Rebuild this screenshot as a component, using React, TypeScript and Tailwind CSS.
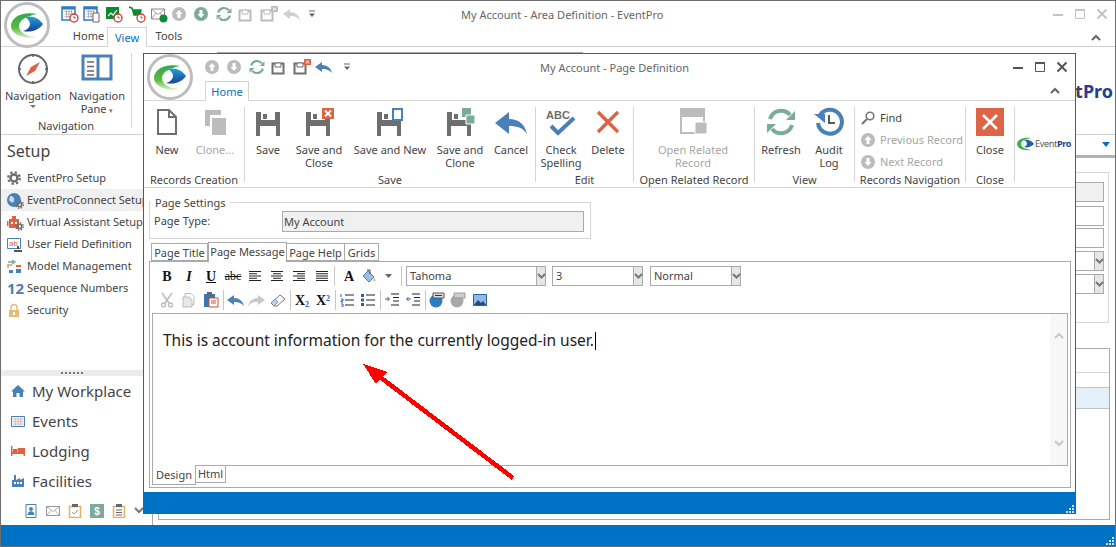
import type { ReactNode } from "react";

const GRAY = "#6e6e6e";
const LIGHT = "#bcbcbc";
const GREEN = "#7dab9b";
const BLUE = "#4a80b8";
const RED = "#dc6444";

function Logo({ size = 46 }: { size?: number }) {
  return (
    <svg width={size} height={size} viewBox="0 0 46 46">
      <defs>
        <linearGradient id="swoosh" x1="0" y1="0" x2="0" y2="1">
          <stop offset="0" stopColor="#2fa84a" />
          <stop offset="0.6" stopColor="#5cbb3f" />
          <stop offset="1" stopColor="#d6edc0" />
        </linearGradient>
        <linearGradient id="lens" x1="0" y1="0" x2="0" y2="1">
          <stop offset="0" stopColor="#1ea3d8" />
          <stop offset="1" stopColor="#1d3f96" />
        </linearGradient>
      </defs>
      <circle cx="23" cy="23" r="21.5" fill="#fff" stroke="#bdbdbd" strokeWidth="3" />
      <path d="M33 12C19 9 7 15 7 24c0 8 12 14 26 11-11 0-18-5-18-11 0-6 8-10 18-12z" fill="url(#swoosh)" />
      <path d="M21 15c7-2 14 1 18 7-4 6-12 9-20 7 4-1 7-4 7-7s-2-5-5-7z" fill="url(#lens)" />
    </svg>
  );
}

function Sv({ s = 16, w, h, v, children }: { s?: number; w?: number; h?: number; v?: string; children: ReactNode }) {
  const ww = w ?? s;
  const hh = h ?? s;
  return (
    <svg width={ww} height={hh} viewBox={v ?? `0 0 ${ww} ${hh}`} className="shrink-0">
      {children}
    </svg>
  );
}

function Floppy({ c = GRAY }: { c?: string }) {
  return (
    <>
      <path d="M2 4h24v24H2z" fill={c} />
      <path d="M7 4h14v8H7z" fill="#fff" />
      <path d="M9 6h4v5H9z" fill={c} />
      <path d="M6 18h16v10H6z" fill="#fff" />
    </>
  );
}

const NewIcon = () => (
  <Sv s={28}>
    <path d="M5 2h11l7 7v17H5z" fill="#fff" stroke={GRAY} strokeWidth="2" />
    <path d="M16 2v7h7" fill="none" stroke={GRAY} strokeWidth="2" />
  </Sv>
);
const CloneIcon = () => (
  <Sv s={28}>
    <path d="M4 2h16v16H4z" fill={LIGHT} />
    <path d="M9 7h16v21H9z" fill="#fff" />
    <path d="M11 10h14v17H11z" fill={LIGHT} />
  </Sv>
);
const SaveIcon = () => (
  <Sv s={28}>
    <Floppy />
  </Sv>
);
const SaveCloseIcon = () => (
  <Sv w={30} h={28}>
    <Floppy />
    <path d="M18 0h12v11H18z" fill={RED} />
    <path d="M21 2.5l6 6M27 2.5l-6 6" stroke="#fff" strokeWidth="1.8" />
  </Sv>
);
const SaveNewIcon = () => (
  <Sv w={30} h={28}>
    <Floppy />
    <path d="M18 1h9v11h-9z" fill="#fff" stroke={BLUE} strokeWidth="2" />
  </Sv>
);
const SaveCloneIcon = () => (
  <Sv w={30} h={28}>
    <Floppy />
    <path d="M17 0h9v9h-9z" fill={GREEN} />
    <path d="M21 7h9v9h-9z" fill={GREEN} stroke="#fff" strokeWidth="1" />
  </Sv>
);
const CancelIcon = () => (
  <Sv w={32} h={28}>
    <path d="M0 15L14 4v7c9 0 16 5 18 15-4-6-9-8-18-8v8z" fill={BLUE} />
  </Sv>
);
const SpellIcon = () => (
  <Sv w={32} h={28}>
    <text x="1" y="11" fontSize="11" fontWeight="700" fill={GRAY} fontFamily="Liberation Sans, sans-serif">ABC</text>
    <path d="M6 18l7 7L29 10" fill="none" stroke={BLUE} strokeWidth="4" />
  </Sv>
);
const DeleteIcon = () => (
  <Sv s={28}>
    <path d="M4 4l20 20M24 4L4 24" stroke={RED} strokeWidth="3.4" />
  </Sv>
);
const RelatedIcon = () => (
  <Sv s={30}>
    <path d="M2 1h25v8H2z" fill={LIGHT} />
    <path d="M3 9h23v17H3z" fill="#fff" stroke={LIGHT} strokeWidth="2" />
    <path d="M17 15h12v12H17z" fill={LIGHT} stroke="#fff" strokeWidth="1" />
  </Sv>
);
const RefreshIcon = ({ s = 30 }: { s?: number }) => (
  <Sv s={s} v="0 0 30 30">
    <path d="M4 12A11.5 11.5 0 0 1 24 8" fill="none" stroke={GREEN} strokeWidth="4" />
    <path d="M20 13h9V4z" fill={GREEN} />
    <path d="M26 18A11.5 11.5 0 0 1 6 22" fill="none" stroke={GREEN} strokeWidth="4" />
    <path d="M10 17H1v9z" fill={GREEN} />
  </Sv>
);
const AuditIcon = () => (
  <Sv s={30}>
    <path d="M6 8a12 12 0 1 1-2 8" fill="none" stroke={BLUE} strokeWidth="4" />
    <path d="M0 7h11v9z" fill={BLUE} />
    <path d="M15 8v8h6" fill="none" stroke="#5a5a5a" strokeWidth="2" />
  </Sv>
);
const CloseBig = () => (
  <div className="flex h-[28px] w-[28px] items-center justify-center bg-[#dd6547]">
    <Sv s={18}>
      <path d="M2 2l14 14M16 2L2 16" stroke="#fff" strokeWidth="2.6" />
    </Sv>
  </div>
);

function CircleArrow({ up, c = LIGHT, s = 14 }: { up?: boolean; c?: string; s?: number }) {
  return (
    <Sv s={s} v="0 0 14 14">
      <circle cx="7" cy="7" r="7" fill={c} />
      <path d={up ? "M7 3L3.5 7H5.5V11H8.5V7H10.5z" : "M7 11L3.5 7H5.5V3H8.5V7H10.5z"} fill="#fff" />
    </Sv>
  );
}

function SmallSave({ x, c }: { x?: boolean; c: string }) {
  return (
    <Sv w={19} h={16}>
      <path d="M1.5 4.5h11v10h-11z" fill="none" stroke={c} strokeWidth="2" />
      <path d="M4 4h6v4H4z" fill="#fff" stroke={c} strokeWidth="1" />
      {!x && <path d="M13 4h-1v10h1z" fill={c} />}
      {x && <path d="M11 0h7v6h-7z" fill={c === GRAY ? RED : LIGHT} />}
      {x && <path d="M13 1.5l3 3M16 1.5l-3 3" stroke="#fff" strokeWidth="1" />}
    </Sv>
  );
}

function SmallBack({ c }: { c: string }) {
  return (
    <Sv w={17} h={14}>
      <path d="M0 7l7-5v3c5 0 9 3 10 8-3-3-5-4-10-4v3z" fill={c} />
    </Sv>
  );
}

const QatCaret = () => (
  <Sv s={8}>
    <path d="M1 1h6" stroke="#666" strokeWidth="1" />
    <path d="M1 3.5h6L4 7z" fill="#666" />
  </Sv>
);

function Cal({ frame = "#2c7cc4", tail }: { frame?: string; tail: ReactNode }) {
  return (
    <Sv s={18}>
      <path d="M1 2h13v13H1z" fill="#fff" stroke={frame} strokeWidth="1.5" />
      <path d="M1 2h13v2.5H1z" fill={frame} />
      <path d="M3.500 6.500h8M3.500 9h8M3.500 11.500h8M5.500 5v8M8 5v8M10.500 5v8" stroke="#a8a8a8" strokeWidth="0.8" />
      {tail}
    </Sv>
  );
}

const RedClock = () => (
  <>
    <circle cx="13" cy="13" r="4" fill="#fff" stroke="#d33" strokeWidth="1.3" />
    <path d="M13 11v2h2" fill="none" stroke="#555" strokeWidth="0.8" />
  </>
);

const MainQat = () => (
  <div className="flex items-center pl-[60px]">
    <div className="w-[22px]"><Cal tail={<RedClock />} /></div>
    <div className="w-[22px]"><Cal tail={<path d="M10 8h6v9h-6z" fill="#fff" stroke="#666" strokeWidth="1" />} /></div>
    <div className="w-[23px]">
      <Sv s={18}>
        <path d="M1 2h13v12H1z" fill="#0b8a2e" />
        <path d="M3 11l3-3 2 2 4-5" fill="none" stroke="#fff" strokeWidth="1.2" />
        <RedClock />
      </Sv>
    </div>
    <div className="w-[22px]">
      <Sv s={18}>
        <path d="M1 2l3 1 2 7h6l1-5H5" fill="#0b8a2e" stroke="#0b8a2e" strokeWidth="1.4" />
        <RedClock />
      </Sv>
    </div>
    <div className="w-[22px]">
      <Sv s={18}>
        <path d="M1.500 4h13v10h-13z" fill="#fff" stroke="#888" strokeWidth="1" />
        <path d="M1.500 4L8 9.500 14.500 4M1.500 14L6 8M14.500 14L10 8" fill="none" stroke="#888" strokeWidth="0.8" />
        <circle cx="13.500" cy="13.500" r="4" fill="#0f8a3a" />
      </Sv>
    </div>
    <div className="w-[22px]"><CircleArrow up /></div>
    <div className="w-[22px]"><CircleArrow c={GREEN} /></div>
    <div className="w-[22px]"><RefreshIcon s={16} /></div>
    <div className="w-[22px]"><SmallSave c={LIGHT} /></div>
    <div className="w-[23px]"><SmallSave x c={LIGHT} /></div>
    <div className="w-[25px]"><SmallBack c="#cfcfcf" /></div>
    <QatCaret />
  </div>
);

const ChildQat = () => (
  <div className="flex items-center pl-[61px]">
    <div className="w-[22px]"><CircleArrow up /></div>
    <div className="w-[22px]"><CircleArrow /></div>
    <div className="w-[22px]"><RefreshIcon s={16} /></div>
    <div className="w-[22px]"><SmallSave c={GRAY} /></div>
    <div className="w-[22px]"><SmallSave x c={GRAY} /></div>
    <div className="w-[28px]"><SmallBack c={BLUE} /></div>
    <QatCaret />
  </div>
);

function Controls({ c }: { c: string }) {
  return (
    <div className="flex items-center gap-[8px]">
      <Sv s={14}><path d="M2 8h10" stroke={c} strokeWidth="2" /></Sv>
      <Sv s={14}><path d="M2.500 2.500h9v9h-9z" fill="none" stroke={c} strokeWidth="1" /><path d="M2 2h10v2H2z" fill={c} /></Sv>
      <Sv s={14}><path d="M2.500 2.500l9 9M11.500 2.500l-9 9" stroke={c} strokeWidth="2" /></Sv>
    </div>
  );
}

const ChevUp = ({ c = "#666" }: { c?: string }) => (
  <Sv w={10} h={7}><path d="M1 6l4-4 4 4" fill="none" stroke={c} strokeWidth="2" /></Sv>
);

function RBtn({ w, icon, label, off }: { w: number; icon: ReactNode; label: string; off?: boolean }) {
  return (
    <div style={{ width: w }} className="flex shrink-0 flex-col items-center">
      <div className="mt-[1px] flex h-[28px] items-center justify-center">{icon}</div>
      <div className={`mt-[7px] whitespace-pre-line text-center leading-[13px] ${off ? "text-[#a6a6a6]" : "text-[#444]"}`}>{label}</div>
    </div>
  );
}

function Group({ w, label, children }: { w: number; label: string; children: ReactNode }) {
  return (
    <div style={{ width: w }} className="flex h-[80px] shrink-0 flex-col">
      <div className="flex h-[66px] justify-start">{children}</div>
      <div className="text-center leading-[14px] text-[#444]">{label}</div>
    </div>
  );
}

const Sep = () => <div className="h-[75px] w-px shrink-0 bg-[#d6d6d6]" />;

function NavRow({ icon, label, off }: { icon: ReactNode; label: string; off?: boolean }) {
  return (
    <div className="flex h-[22px] items-center gap-[5px] pl-[6px]">
      <div className="flex w-[14px] justify-center">{icon}</div>
      <span className={off ? "text-[#a6a6a6]" : "text-[#444]"}>{label}</span>
    </div>
  );
}

const Gear = ({ s = 14, c = GRAY }: { s?: number; c?: string }) => (
  <Sv s={s} v="0 0 14 14">
    <circle cx="7" cy="7" r="3.500" fill="none" stroke={c} strokeWidth="2.500" />
    <circle cx="7" cy="7" r="5.800" fill="none" stroke={c} strokeWidth="2.200" strokeDasharray="2.300 2.250" />
  </Sv>
);

function SideItem({ icon, label, active }: { icon: ReactNode; label: string; active?: boolean }) {
  return (
    <div className={`flex h-[22px] items-center whitespace-nowrap pl-[6px] text-[#444] ${active ? "bg-[#f0f0f0]" : ""}`}>
      <div className="flex w-[20px] shrink-0 justify-start">{icon}</div>
      <span>{label}</span>
    </div>
  );
}

function BottomNav({ icon, label }: { icon: ReactNode; label: string }) {
  return (
    <div className="flex h-[30px] items-center pl-[10px] text-[15px] text-[#444]">
      <div className="flex w-[21px] shrink-0 justify-start">{icon}</div>
      <span>{label}</span>
    </div>
  );
}

function Sidebar() {
  return (
    <div className="flex w-[142px] shrink-0 flex-col">
      <div className="flex h-[32px] items-center pl-[6px] text-[16px] text-[#444]">Setup</div>
      <SideItem icon={<Gear />} label="EventPro Setup" />
      <SideItem
        active
        icon={
          <div className="relative h-[15px] w-[15px]">
            <Sv s={15}><circle cx="7" cy="7" r="7" fill={BLUE} /><path d="M3 3c3 0 5 2 4 5S3 9 2 7z" fill="#fff" opacity="0.7" /></Sv>
            <div className="absolute -bottom-[1px] -right-[2px]"><Gear s={9} /></div>
          </div>
        }
        label="EventProConnect Setup"
      />
      <SideItem
        icon={
          <div className="relative h-[15px] w-[15px]">
            <Sv s={15}><path d="M2 4h10v9H2z" fill={RED} /><path d="M0 6h1.500v5H0zM5 1h4v3H5z" fill={RED} /><path d="M4 7h2v2H4zM8 7h2v2H8z" fill="#fff" /></Sv>
            <div className="absolute -bottom-[1px] -right-[2px]"><Gear s={9} /></div>
          </div>
        }
        label="Virtual Assistant Setup"
      />
      <SideItem
        icon={
          <Sv s={15}>
            <path d="M.5 1.500h13v10H.5z" fill="#fff" stroke={BLUE} />
            <text x="2" y="9" fontSize="8" fill={RED} fontFamily="Liberation Sans, sans-serif">ab</text>
            <path d="M11 9v3M7 14h8" stroke="#555" strokeWidth="2" />
          </Sv>
        }
        label="User Field Definition"
      />
      <SideItem
        icon={
          <Sv s={15}>
            <path d="M1 3h6M5 1l3 2-3 2" fill="none" stroke={GREEN} strokeWidth="1.300" />
            <path d="M9 7h5" stroke={RED} strokeWidth="2" />
            <path d="M2 11h4v3H2z" fill={BLUE} />
            <path d="M9 10h5v4H9z" fill={BLUE} />
            <path d="M5 6H1v3" fill="none" stroke="#c9a35e" strokeWidth="1.500" />
          </Sv>
        }
        label="Model Management"
      />
      <SideItem icon={<span className="text-[15px] font-bold leading-none text-[#4a80b8]">12</span>} label="Sequence Numbers" />
      <SideItem
        icon={
          <Sv s={15}>
            <path d="M4 7V4.500a3 3 0 0 1 6 0V7" fill="none" stroke="#e4bb78" strokeWidth="1.500" />
            <path d="M2 7h10v7H2z" fill="#e4bb78" />
            <path d="M6 9h2v3H6z" fill="#fff" />
          </Sv>
        }
        label="Security"
      />
      <div className="flex-1" />
      <div className="flex h-[6px] items-center justify-center gap-[2px] bg-[#ececec]">
        {[0, 1, 2, 3, 4, 5].map((d) => (
          <div key={d} className="h-[2px] w-[2px] bg-[#777]" />
        ))}
      </div>
      <BottomNav
        icon={<Sv s={14}><path d="M7 1l7 6.500h-2V13H8.500V9h-3v4H2V7.500H0z" fill={BLUE} /></Sv>}
        label="My Workplace"
      />
      <BottomNav
        icon={
          <Sv s={14}>
            <path d="M.5 2.500h13v10H.5z" fill="#f3eeee" stroke={BLUE} />
            <path d="M2 5h10M2 7.500h10M2 10h10M4.500 4v7.500M7 4v7.500M9.500 4v7.500" stroke="#d9b8b8" strokeWidth="0.800" />
          </Sv>
        }
        label="Events"
      />
      <BottomNav
        icon={
          <Sv s={14}>
            <path d="M0 2h1.500v6H14v4h-1.500v-2h-11v2H0z" fill={RED} />
            <path d="M2 5h4v3H2zM6.500 4H14v4H6.500z" fill={RED} />
          </Sv>
        }
        label="Lodging"
      />
      <BottomNav
        icon={
          <Sv s={14}>
            <path d="M1 13V6h2V1h2v5l4-2v2l4-2v9z" fill={BLUE} />
            <path d="M3 8h2v2H3zM6 8h2v2H6zM9 8h2v2H9z" fill="#fff" />
          </Sv>
        }
        label="Facilities"
      />
      <div className="flex h-[29px] items-center gap-[8px] pl-[23px]">
        <Sv s={14}><path d="M2 .500h10v13H2z" fill="#fff" stroke={BLUE} /><circle cx="7" cy="5" r="2" fill={BLUE} /><path d="M3.500 11c0-5 7-5 7 0z" fill={BLUE} /></Sv>
        <Sv s={14}><path d="M.5 2.500h13v9H.5z" fill="#fff" stroke="#999" /><path d="M.5 2.500L7 7.500l6.500-5M.5 11.500L5 6.500M13.500 11.500L9 6.500" fill="none" stroke="#999" strokeWidth="0.800" /></Sv>
        <Sv s={14}><path d="M1.500 2.500h11v11h-11z" fill="#fff" stroke="#e0b36c" strokeWidth="1.500" /><path d="M4 0h6v3H4z" fill="#666" /><path d="M4 8l2 2 4-4" fill="none" stroke={GREEN} /></Sv>
        <Sv s={14}><path d="M0 0h14v14H0z" fill={GREEN} /><text x="7" y="11" textAnchor="middle" fontSize="10" fontWeight="700" fill="#fff" fontFamily="Liberation Sans, sans-serif">$</text></Sv>
        <Sv s={14}><path d="M1.500 2.500h11v11h-11z" fill="#fff" stroke="#e0b36c" strokeWidth="1.500" /><path d="M4 0h6v3H4z" fill="#666" /><path d="M4 6h6M4 8.500h6M4 11h6" stroke="#666" /></Sv>
        <Sv w={10} h={7}><path d="M1 1l4 4 4-4" fill="none" stroke="#777" strokeWidth="2" /></Sv>
      </div>
    </div>
  );
}

const Grip = ({ c = "#cfe3f4" }: { c?: string }) => (
  <Sv w={9} h={9}>
    <path d="M7 1h2v2H7zM7 4h2v2H7zM7 7h2v2H7zM4 4h2v2H4zM4 7h2v2H4zM1 7h2v2H1z" fill={c} />
  </Sv>
);

function SelArrow({ w = 12 }: { w?: number }) {
  return (
    <div style={{ width: w }} className="flex shrink-0 items-center justify-center border-l border-[#aaa] bg-[#e6e6e6]">
      <Sv w={9} h={6}><path d="M1 1l3.500 3.500L8 1" fill="none" stroke="#777" strokeWidth="2" /></Sv>
    </div>
  );
}

function BehindContent() {
  const field = "h-[20px] border border-[#aaa]";
  return (
    <div className="flex min-w-0 flex-1 flex-col">
      <div className="flex h-[23px] shrink-0 justify-end border-b-[3px] border-[#b2b2b2] pr-[5px] pt-[7px]">
        <Sv w={8} h={6}><path d="M0 0h8L4 5z" fill="#0072c6" /></Sv>
      </div>
      <div className="ml-[9px] flex flex-1 flex-col border-l border-[#aaa] pl-[5px] pt-[14px]">
        <div className="mr-[6px] flex h-[151px] shrink-0 flex-col border border-[#d6d6d6] pl-[4px] pr-[4px] pt-[9px]">
          <div className={`${field} bg-[#f0f0f0]`} />
          <div className={`${field} mt-[4px]`} />
          <div className={`${field} mt-[2px]`} />
          <div className={`${field} mt-[3px] flex justify-end`}><SelArrow w={9} /></div>
          <div className={`${field} mt-[3px] flex justify-end`}><SelArrow w={9} /></div>
        </div>
        <div className="mr-[5px] mt-[25px] flex h-[172px] shrink-0 flex-col border border-[#aaa]">
          <div className="h-[24px] border-b border-[#d6d6d6]" />
          <div className="mt-[14px] h-[22px] border-y border-[#c4c4c4] bg-[#e3eff9]" />
        </div>
      </div>
    </div>
  );
}

function MainWindow() {
  return (
    <div className="flex h-[547px] w-[1116px] flex-col border border-[#6e6e6e] bg-white">
      <div className="flex h-[46px] shrink-0 flex-col border-b border-[#d4d4d4]">
        <div className="relative flex h-[27px] items-center">
          <MainQat />
          <div className="absolute left-[460px] top-[6px] text-[#666]">My Account - Area Definition - EventPro</div>
          <div className="absolute right-[6px] top-[6px]"><Controls c="#c4c4c4" /></div>
        </div>
        <div className="relative flex h-[20px] items-end pl-[69px] leading-[18px] text-[#444]">
          <div className="w-[37px] pb-[1px] text-center">Home</div>
          <div className="z-10 -mb-px h-[20px] w-[40px] border border-b-0 border-[#d4d4d4] bg-white pt-[1px] text-center text-[#0072c6]">View</div>
          <div className="w-[44px] pb-[1px] text-center">Tools</div>
          <div className="absolute right-[14px] top-[7px]"><ChevUp /></div>
        </div>
      </div>
      <div className="flex h-[88px] shrink-0 border-b border-[#d4d4d4] pt-[6px]">
        <div className="flex h-[75px] w-[131px] flex-col border-r border-[#d6d6d6]">
          <div className="flex h-[60px]">
            <div className="flex w-[64px] flex-col items-center">
              <Sv s={32}>
                <circle cx="16" cy="16" r="14" fill="none" stroke="#666" strokeWidth="2" />
                <path d="M16 1v3M16 28v3M1 16h3M28 16h3" stroke="#666" strokeWidth="1.500" />
                <path d="M23 9l-5 9-9 5 5-9z" fill={RED} />
              </Sv>
              <div className="mt-[4px] leading-[13px] text-[#444]">Navigation</div>
              <Sv w={6} h={8}><path d="M0 3h6L3 6z" fill="#777" /></Sv>
            </div>
            <div className="flex w-[64px] flex-col items-center">
              <Sv s={32}>
                <path d="M2 3h28v23H2z" fill="#fff" stroke={BLUE} strokeWidth="3" />
                <path d="M17 3v23" stroke={BLUE} strokeWidth="3" />
                <path d="M6 9h7M6 13.500h7M6 18h7M6 22h7" stroke="#666" strokeWidth="1.500" />
              </Sv>
              <div className="mt-[4px] text-center leading-[13px] text-[#444]">
                Navigation
                <br />
                Pane <span className="align-middle text-[7px] text-[#777]">▾</span>
              </div>
            </div>
          </div>
          <div className="mt-[6px] text-center leading-[14px] text-[#444]">Navigation</div>
        </div>
        <div className="flex flex-1 items-start justify-end pr-[2px] pt-[27px] text-[18px] font-bold leading-[22px]">
          <span className="text-[#3a3f66]">t</span>
          <span className="text-[#23408f]">Pro</span>
        </div>
      </div>
      <div className="flex min-h-0 flex-1">
        <Sidebar />
        <BehindContent />
      </div>
      <div className="flex h-[21px] shrink-0 items-end justify-end bg-[#0072c6] pb-[1px] pr-[1px]">
        <Grip />
      </div>
    </div>
  );
}

function ChildRibbon() {
  return (
    <div className="flex h-[87px] shrink-0 border-b border-[#d4d4d4] pt-[6px]">
      <Group w={100} label="Records Creation">
        <RBtn w={46} icon={<NewIcon />} label="New" />
        <RBtn w={50} icon={<CloneIcon />} label="Clone..." off />
      </Group>
      <Sep />
      <Group w={290} label="Save">
        <RBtn w={46} icon={<SaveIcon />} label="Save" />
        <RBtn w={56} icon={<SaveCloseIcon />} label={"Save and\nClose"} />
        <RBtn w={86} icon={<SaveNewIcon />} label="Save and New" />
        <RBtn w={54} icon={<SaveCloneIcon />} label={"Save and\nClone"} />
        <RBtn w={48} icon={<CancelIcon />} label="Cancel" />
      </Group>
      <Sep />
      <Group w={97} label="Edit">
        <RBtn w={50} icon={<SpellIcon />} label={"Check\nSpelling"} />
        <RBtn w={44} icon={<DeleteIcon />} label="Delete" />
      </Group>
      <Sep />
      <Group w={120} label="Open Related Record">
        <RBtn w={118} icon={<RelatedIcon />} label={"Open Related\nRecord"} off />
      </Group>
      <Sep />
      <Group w={99} label="View">
        <RBtn w={52} icon={<RefreshIcon />} label="Refresh" />
        <RBtn w={44} icon={<AuditIcon />} label={"Audit\nLog"} />
      </Group>
      <Sep />
      <Group w={110} label="Records Navigation">
        <div className="flex flex-col">
          <NavRow
            label="Find"
            icon={
              <Sv s={14}>
                <circle cx="9" cy="5" r="3.800" fill="none" stroke="#777" strokeWidth="1.600" />
                <path d="M6 8l-5 5" stroke="#777" strokeWidth="2.200" />
              </Sv>
            }
          />
          <NavRow label="Previous Record" off icon={<CircleArrow up />} />
          <NavRow label="Next Record" off icon={<CircleArrow />} />
        </div>
      </Group>
      <Sep />
      <Group w={48} label="Close">
        <RBtn w={48} icon={<CloseBig />} label="Close" />
      </Group>
      <Sep />
      <div className="flex h-[75px] flex-1 items-start pl-[2px] pt-[30px]">
        <Sv w={18} h={14}>
          <path d="M14 1C6 0 0 3 0 7s6 7 14 6C8 12 4 10 4 7s4-5 10-6z" fill="#41ad49" />
          <path d="M7 3c4-1 8 1 10 4-3 3-7 4-10 3 2-1 3-2 3-3.500S9 4 7 3z" fill="#1d5fa8" />
        </Sv>
        <span className="-ml-[0px] text-[9px] leading-[14px] tracking-[-0.3px]">
          <span className="text-[#555]">Event</span>
          <span className="font-bold text-[#23408f]">Pro</span>
        </span>
      </div>
    </div>
  );
}

function Cell({ w = 22, children }: { w?: number; children: ReactNode }) {
  return <div style={{ width: w }} className="flex h-[20px] shrink-0 items-center justify-center">{children}</div>;
}

const TSep = () => <div className="mx-[1px] h-[20px] w-px shrink-0 bg-[#c8c8c8]" />;

function Align({ mode }: { mode: "l" | "c" | "r" | "j" }) {
  const rows = [0, 1, 2, 3, 4];
  const x = (i: number) => {
    const short = i % 2 === 1 && mode !== "j";
    if (!short) return "M0 0";
    return mode === "l" ? "M0 0" : mode === "r" ? "M4 0" : "M2 0";
  };
  return (
    <Sv w={12} h={12}>
      {rows.map((i) => {
        const short = i % 2 === 1 && mode !== "j";
        const start = short ? (mode === "l" ? 0 : mode === "r" ? 4 : 2) : 0;
        const len = short ? 8 : 12;
        return <path key={i} d={`M${start} ${1.5 + i * 2.25}h${len}`} stroke="#222" strokeWidth="1" data-x={x(i)} />;
      })}
    </Sv>
  );
}

function Select({ w, value, arrow = 12, mr = 0 }: { w: number; value: string; arrow?: number; mr?: number }) {
  return (
    <div style={{ width: w, marginRight: mr }} className="flex h-[20px] shrink-0 border border-[#aaa] bg-white">
      <div className="flex-1 pl-[3px] leading-[18px] text-[#444]">{value}</div>
      <SelArrow w={arrow - 3} />
    </div>
  );
}

function Toolbar() {
  const serif = "font-['Liberation_Serif',serif] text-[#111]";
  return (
    <div className="flex h-[51px] flex-col pl-[4px] pt-[4px]">
      <div className="flex h-[20px] items-center">
        <Cell><span className={`${serif} text-[14px] font-bold`}>B</span></Cell>
        <Cell><span className={`${serif} text-[14px] font-bold italic`}>I</span></Cell>
        <Cell><span className={`${serif} text-[14px] font-bold underline`}>U</span></Cell>
        <Cell><span className={`${serif} text-[12px] line-through`}>abc</span></Cell>
        <Cell><Align mode="l" /></Cell>
        <Cell><Align mode="c" /></Cell>
        <Cell><Align mode="r" /></Cell>
        <Cell w={23}><Align mode="j" /></Cell>
        <TSep />
        <Cell w={26}><span className={`${serif} text-[14px] font-bold`}>A</span></Cell>
        <Cell w={14}>
          <Sv s={16}>
            <path d="M2 8l5-5 6 6-5 5z" fill="#9cc0e4" stroke={BLUE} />
            <path d="M6 2h3v4" fill="none" stroke="#444" />
            <path d="M13 9l2 4h-3z" fill="#e4bb78" />
          </Sv>
        </Cell>
        <Cell w={24}><Sv w={7} h={4}><path d="M0 0h7L3.500 4z" fill="#666" /></Sv></Cell>
        <TSep />
        <div className="w-[3px]" />
        <Select w={140} value="Tahoma" arrow={12} mr={6} />
        <Select w={91} value="3" arrow={12} mr={7} />
        <Select w={91} value="Normal" arrow={12} />
      </div>
      <div className="mt-[4px] flex h-[20px] items-center">
        <Cell>
          <Sv s={16}>
            <path d="M3 1l7 10M13 1L6 11" stroke={LIGHT} strokeWidth="1.500" />
            <circle cx="4.500" cy="13" r="2" fill="none" stroke={LIGHT} strokeWidth="1.300" />
            <circle cx="11.500" cy="13" r="2" fill="none" stroke={LIGHT} strokeWidth="1.300" />
          </Sv>
        </Cell>
        <Cell>
          <Sv s={16}>
            <path d="M4 1.500h6l3 3v8H4z" fill="#fff" stroke={LIGHT} />
            <path d="M2 5h6l3 3v7H2z" fill="#e8e8e8" stroke={LIGHT} />
          </Sv>
        </Cell>
        <Cell>
          <Sv s={16}>
            <path d="M1 2h11v13H1z" fill="#3b76b2" />
            <path d="M4 0h5v3H4z" fill="#666" />
            <path d="M6 6h9v9H6z" fill="#fff" stroke="#c8512f" />
            <path d="M8 9h5M8 11h5" stroke="#c8512f" />
          </Sv>
        </Cell>
        <TSep />
        <Cell w={20}><SmallBack c={BLUE} /></Cell>
        <Cell><Sv w={17} h={14}><path d="M17 7l-7-5v3C5 5 1 8 0 13c3-3 5-4 10-4v3z" fill="#c8c8c8" /></Sv></Cell>
        <Cell>
          <Sv s={16}>
            <path d="M1 11L10 3l5 4-8 7H4z" fill="#fff" stroke="#777" />
            <path d="M1 11l3 3 4-4-3-3z" fill="#b9d2ea" stroke="#777" strokeWidth="0.700" />
          </Sv>
        </Cell>
        <TSep />
        <Cell w={20}><span className={`${serif} text-[14px] font-bold`}>X<sub className="text-[8px] text-[#2c5fa8]">2</sub></span></Cell>
        <Cell><span className={`${serif} text-[14px] font-bold`}>X<sup className="text-[8px] text-[#2c5fa8]">2</sup></span></Cell>
        <TSep />
        <Cell w={20}>
          <Sv s={14}>
            <path d="M5 2h9M5 7h9M5 12h9" stroke="#222" />
            <path d="M1 1v3M1 6h2v2H1v1h2M1 11h2v3H1" fill="none" stroke="#2c5fa8" />
          </Sv>
        </Cell>
        <Cell>
          <Sv s={14}>
            <path d="M5 2h9M5 7h9M5 12h9" stroke="#222" />
            <path d="M0 1h3v3H0zM0 5.500h3v3H0zM0 10h3v3H0z" fill="#2c5fa8" />
          </Sv>
        </Cell>
        <TSep />
        <Cell w={20}>
          <Sv s={14}>
            <path d="M6 1h8M8 4.500h6M8 8h6M6 12h8" stroke="#222" />
            <path d="M0 6h4M2.500 4l2 2-2 2" fill="none" stroke="#2c5fa8" />
          </Sv>
        </Cell>
        <Cell>
          <Sv s={14}>
            <path d="M6 1h8M8 4.500h6M8 8h6M6 12h8" stroke="#222" />
            <path d="M5 6H1M2.500 4l-2 2 2 2" fill="none" stroke="#2c5fa8" />
          </Sv>
        </Cell>
        <TSep />
        <Cell w={20}>
          <Sv s={16}>
            <circle cx="7" cy="9" r="6.500" fill="#2c7cc4" />
            <path d="M4 1h11v5H4z" fill="#ddd" stroke="#555" />
            <path d="M6 3.500h7" stroke="#333" />
          </Sv>
        </Cell>
        <Cell>
          <Sv s={16}>
            <circle cx="7" cy="9" r="6.500" fill="#a8a8a8" />
            <path d="M4 1h11v5H4z" fill="#ccc" stroke="#999" />
          </Sv>
        </Cell>
        <Cell>
          <Sv s={16}>
            <path d="M1.500 2.500h13v11h-13z" fill="#8fbbe4" stroke="#2c5fa8" />
            <path d="M2 13l4-5 3 3 2-2 3 4z" fill="#1e4a86" />
          </Sv>
        </Cell>
      </div>
    </div>
  );
}

function PageTab({ w, label, active }: { w: number; label: string; active?: boolean }) {
  return (
    <div
      style={{ width: w }}
      className={`shrink-0 border border-[#aaa] text-center text-[#444] ${active ? "z-10 -mb-px h-[20px] border-b-0 bg-white leading-[17px]" : "h-[18px] border-l-0 leading-[17px]"}`}
    >
      {label}
    </div>
  );
}

function ChildWindow() {
  return (
    <div className="absolute left-[143px] top-[53px] flex h-[461px] w-[933px] flex-col border-x border-t border-[#0072c6] bg-white">
      <div className="relative flex h-[26px] shrink-0 items-center">
        <ChildQat />
        <div className="absolute left-[396px] top-[6px] text-[#666]">My Account - Page Definition</div>
        <div className="absolute right-[6px] top-[6px]"><Controls c="#555" /></div>
      </div>
      <div className="relative flex h-[21px] shrink-0 items-end border-b border-[#d4d4d4] pl-[61px]">
        <div className="z-10 -mb-px h-[20px] w-[44px] border border-b-0 border-[#d4d4d4] bg-white text-center leading-[20px] text-[#0072c6]">Home</div>
        <div className="absolute right-[15px] top-[7px]"><ChevUp /></div>
      </div>
      <ChildRibbon />
      <div className="flex min-h-0 flex-1 flex-col pl-[5px] pt-[14px]">
        <div className="relative flex h-[37px] w-[442px] shrink-0 items-center justify-start border border-[#d6d6d6]">
          <div className="absolute -top-[8px] left-[1px] bg-white pl-[4px] pr-[4px] leading-[15px] text-[#444]">Page Settings</div>
          <div className="w-[132px] pl-[4px] pt-[2px] text-[#444]">Page Type:</div>
          <div className="mt-[2px] h-[21px] w-[302px] border border-[#aaa] bg-[#f0f0f0] pl-[1px] leading-[19px] text-[#444]">My Account</div>
        </div>
        <div className="mt-[2px] flex h-[20px] shrink-0 items-end pl-[2px]">
          <div className="h-[18px] w-[57px] shrink-0 border border-[#aaa] text-center leading-[17px] text-[#444]">Page Title</div>
          <PageTab w={79} label="Page Message" active />
          <PageTab w={58} label="Page Help" />
          <PageTab w={34} label="Grids" />
        </div>
        <div className="flex h-[227px] w-[922px] shrink-0 flex-col border border-[#aaa] pl-[2px] pr-[2px]">
          <Toolbar />
          <div className="flex h-[153px] shrink-0 border border-[#aaa]">
            <div className="flex-1 pl-[10px] pt-[14px] font-['Noto_Sans',sans-serif] text-[15.5px] leading-[22px] text-[#222]">
              This is account information for the currently logged-in user.<span className="ml-px inline-block h-[18px] w-px translate-y-[4px] bg-black" />
            </div>
            <div className="flex w-[17px] flex-col items-center justify-between bg-[#f7f7f7] py-[18px]">
              <ChevUp c="#c8c8c8" />
              <div className="rotate-180"><ChevUp c="#c8c8c8" /></div>
            </div>
          </div>
          <div className="flex">
            <div className="-mt-px h-[20px] w-[44px] border-x border-b border-[#aaa] bg-white text-center leading-[20px] text-[#444]">Design</div>
            <div className="h-[17px] w-[30px] border-r border-b border-[#aaa] text-center leading-[15px] text-[#444]">Html</div>
          </div>
        </div>
      </div>
      <div className="flex h-[22px] shrink-0 items-end justify-end bg-[#0072c6] pb-[1px] pr-[1px]">
        <Grip />
      </div>
    </div>
  );
}

export default function App() {
  return (
    <div className="relative h-[547px] w-[1116px] overflow-hidden bg-white font-['Noto_Sans',sans-serif] text-[11px]">
      <MainWindow />
      {/* window stacked between the two visible ones, only its top edge shows */}
      <div className="absolute left-[217px] top-[52px] h-px w-[366px] bg-[#aaa]" />
      <ChildWindow />
      <div className="absolute left-[4px] top-[2px]"><Logo /></div>
      <div className="absolute left-[147px] top-[54px]"><Logo /></div>
      <svg className="absolute left-0 top-0" width="1116" height="547" shapeRendering="crispEdges">
        <path d="M363 364L387 372L376 384z" fill="#ff0000" />
        <path d="M380 377L513 478" stroke="#ff0000" strokeWidth="4.500" />
      </svg>
    </div>
  );
}
